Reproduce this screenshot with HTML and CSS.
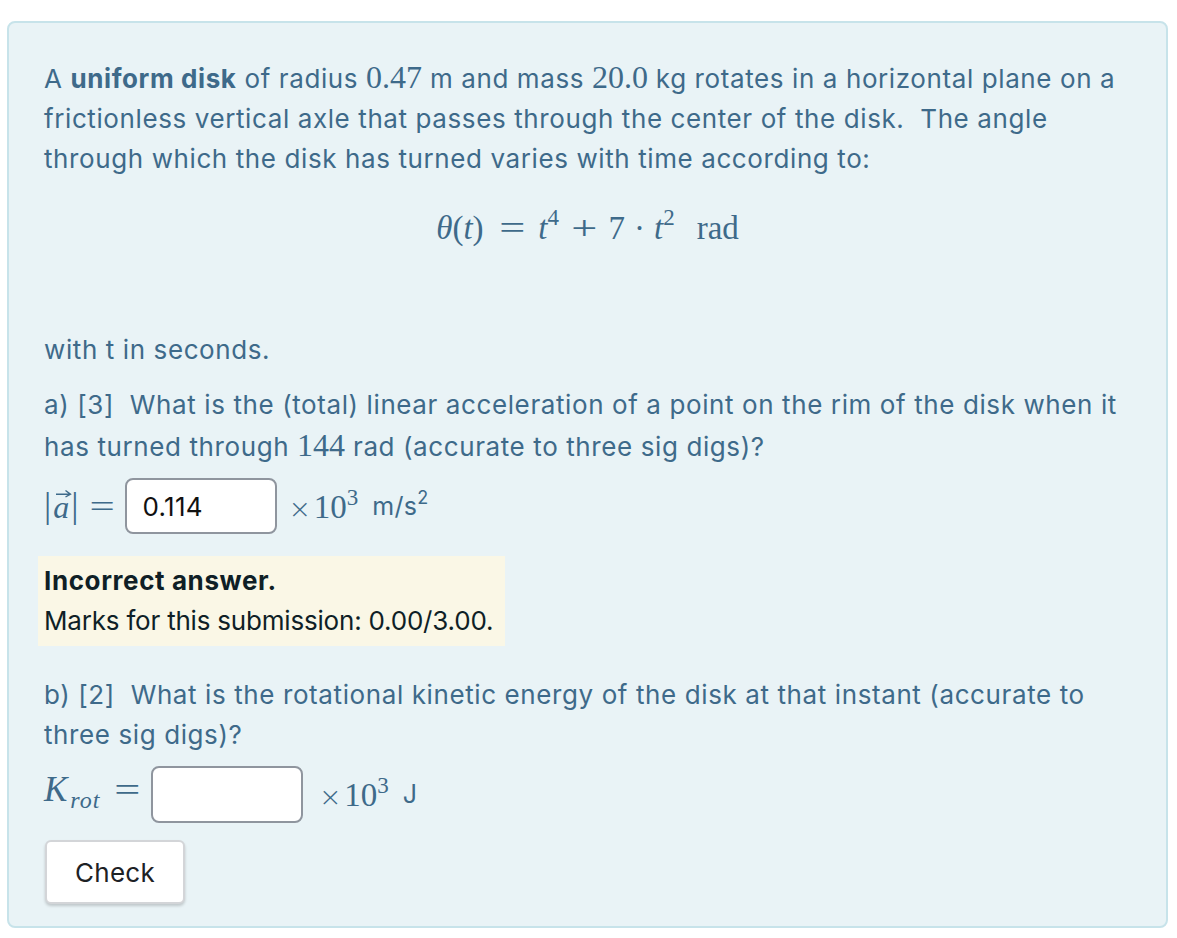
FILE: index.html
```html
<!DOCTYPE html>
<html>
<head>
<meta charset="utf-8">
<link rel="stylesheet" href="styles.css">
</head>
<body>
<div class="que">
  <div class="formulation">
    <p class="intro">A <b>uniform disk</b> of radius <span class="m">0.47</span> m and mass <span class="m">20.0</span> kg rotates in a horizontal plane on a frictionless vertical axle that passes through the center of the disk.&nbsp; The angle through which the disk has turned varies with time according to:</p>
    <div class="display"><span class="mi">θ</span><span class="mn">(</span><span class="mi">t</span><span class="mn">)</span><span class="mo op eqop">=</span><span class="mi">t</span><sup>4</sup><span class="mo op plus">+</span><span class="mn">7</span><span class="mo dot">·</span><span class="mi">t</span><sup>2</sup><span class="mn rad">rad</span></div>
    <p>with t in seconds.</p>
    <p>a) [3]&nbsp; What is the (total) linear acceleration of a point on the rim of the disk when it has turned through <span class="m">144</span> rad (accurate to three sig digs)?</p>
    <div class="ansrow">
      <span class="lhs"><span class="bar">|</span><span class="vec"><span class="mi">a</span><svg class="arr" width="17" height="9" viewBox="0 0 17 9"><path d="M1 5.2 H14.5 M10.5 1.5 L15.5 5.2 L10.5 8" fill="none" stroke="#3e6a8a" stroke-width="1.4"/></svg></span><span class="bar">|</span><span class="mo op eq">=</span></span>
      <span class="inbox a1">0.114</span>
      <span class="unit"><span class="times">×</span><span class="mn">10</span><sup>3</sup></span>
      <span class="utext">m/s<sup class="s">2</sup></span>
    </div>
    <div class="outcome">
      <div class="fb-title">Incorrect answer.</div>
      <div class="fb-marks">Marks for this submission: 0.00/3.00.</div>
    </div>
    <p class="pb">b) [2]&nbsp; What is the rotational kinetic energy of the disk at that instant (accurate to three sig digs)?</p>
    <div class="ansrow">
      <span class="lhs2"><span class="mi kk">K</span><span class="sub">rot</span><span class="mo op eq2">=</span></span>
      <span class="inbox a2"></span>
      <span class="unit u2"><span class="times">×</span><span class="mn">10</span><sup>3</sup></span>
      <span class="utext">J</span>
    </div>
    <div class="btnrow"><button class="check">Check</button></div>
  </div>
</div>
</body>
</html>
```
FILE: styles.css
```css
html, body {
  margin: 0;
  padding: 0;
  background: #ffffff;
}
body {
  font-family: Inter, "Noto Sans", "Liberation Sans", sans-serif;
  font-size: 26px;
  letter-spacing: 0.6px;
  color: #3e6a8a;
}
.que {
  margin: 21px 9px 0 7px;
  height: 907px;
  box-sizing: border-box;
  border: 2px solid #c7e3ea;
  border-radius: 8px;
  background: #e9f3f6;
}
.formulation {
  padding: 34px 35px 0 35px;
}
p {
  margin: 0 0 15px 0;
  line-height: 40px;
}
.intro { margin-bottom: 0; }
b { font-weight: 700; }
.m, .mi, .mn, .mo, sup {
  font-family: "Liberation Serif", "DejaVu Serif", serif;
  letter-spacing: 0;
}
.m { font-size: 32px; }
.mi { font-style: italic; }
.op {
  display: inline-block;
  transform: scaleX(1.4);
}
.display {
  margin: 28px 0 83px 0;
  line-height: 40px;
  height: 40px;
  text-align: center;
  font-size: 33px;
}
.display sup {
  font-size: 23px;
  vertical-align: 14px;
  line-height: 0;
}
.display .eqop { margin: 0 17px 0 19px; }
.display .plus { margin: 0 15px 0 16px; }
.display .dot { margin: 0 9px; }
.display .rad { margin-left: 22px; }
.ansrow {
  display: flex;
  align-items: center;
  height: 56px;
  margin: -4px 0 22px 0;
}
.lhs {
  font-size: 32px;
  display: flex;
  align-items: center;
  white-space: nowrap;
}
.bar { font-family: "Liberation Serif", serif; font-size: 36px; line-height: 40px; margin-top: -2px; letter-spacing: 0; }
.vec { position: relative; display: inline-block; margin: 0 2px 0 2px; }
.arr {
  position: absolute;
  left: 2px;
  top: 2px;
}
.eq { margin: 0 14px 0 15px; }
.lhs2 {
  font-size: 33px;
  white-space: nowrap;
  line-height: 40px;
}
.kk { font-size: 35px; }
.lhs2 .sub {
  font-family: "Liberation Serif", serif;
  font-style: italic;
  font-size: 24px;
  letter-spacing: 1px;
  vertical-align: -7px;
  margin-left: 3px;
}
.eq2 { margin: 0 14px 0 18px; }
.inbox {
  box-sizing: border-box;
  width: 152px;
  height: 56px;
  background: #fff;
  border: 2px solid #8f959e;
  border-radius: 8px;
  padding: 0 15px;
  display: flex;
  align-items: center;
  color: #111;
  font-size: 26px;
  letter-spacing: 0.3px;
}
.a2 { height: 57px; }
.unit {
  font-size: 33px;
  margin-left: 11px;
  white-space: nowrap;
}
.unit .times { font-family: "DejaVu Sans", sans-serif; font-size: 27px; font-weight: 300; margin-right: 2px; }
.unit sup { font-size: 23px; vertical-align: 13px; line-height: 0; }
.u2 { margin-left: 16px; }
.utext { margin-left: 14px; font-size: 25px; letter-spacing: 0.3px; }
.utext .s { font-family: Inter, sans-serif; font-size: 18px; vertical-align: 11px; line-height: 0; }
.outcome {
  display: inline-block;
  margin-left: -6px;
  padding: 5px 12px 5px 6px;
  background: #faf7e6;
  color: #0f1f26;
  line-height: 40px;
  letter-spacing: 0;
}
.fb-title { font-weight: 700; letter-spacing: 0.6px; }
.fb-marks { letter-spacing: -0.2px; }
.pb { margin-top: 29px; }
.btnrow { margin-top: -4px; }
.check {
  box-sizing: border-box;
  width: 140px;
  height: 64px;
  margin-left: 1px;
  font-family: Inter, "Noto Sans", sans-serif;
  font-size: 26px;
  letter-spacing: 0.3px;
  color: #1d2125;
  background: #fff;
  border: 2px solid #d3d5d8;
  border-radius: 6px;
  box-shadow: 0 2px 3px rgba(0,0,0,0.18);
}
```
